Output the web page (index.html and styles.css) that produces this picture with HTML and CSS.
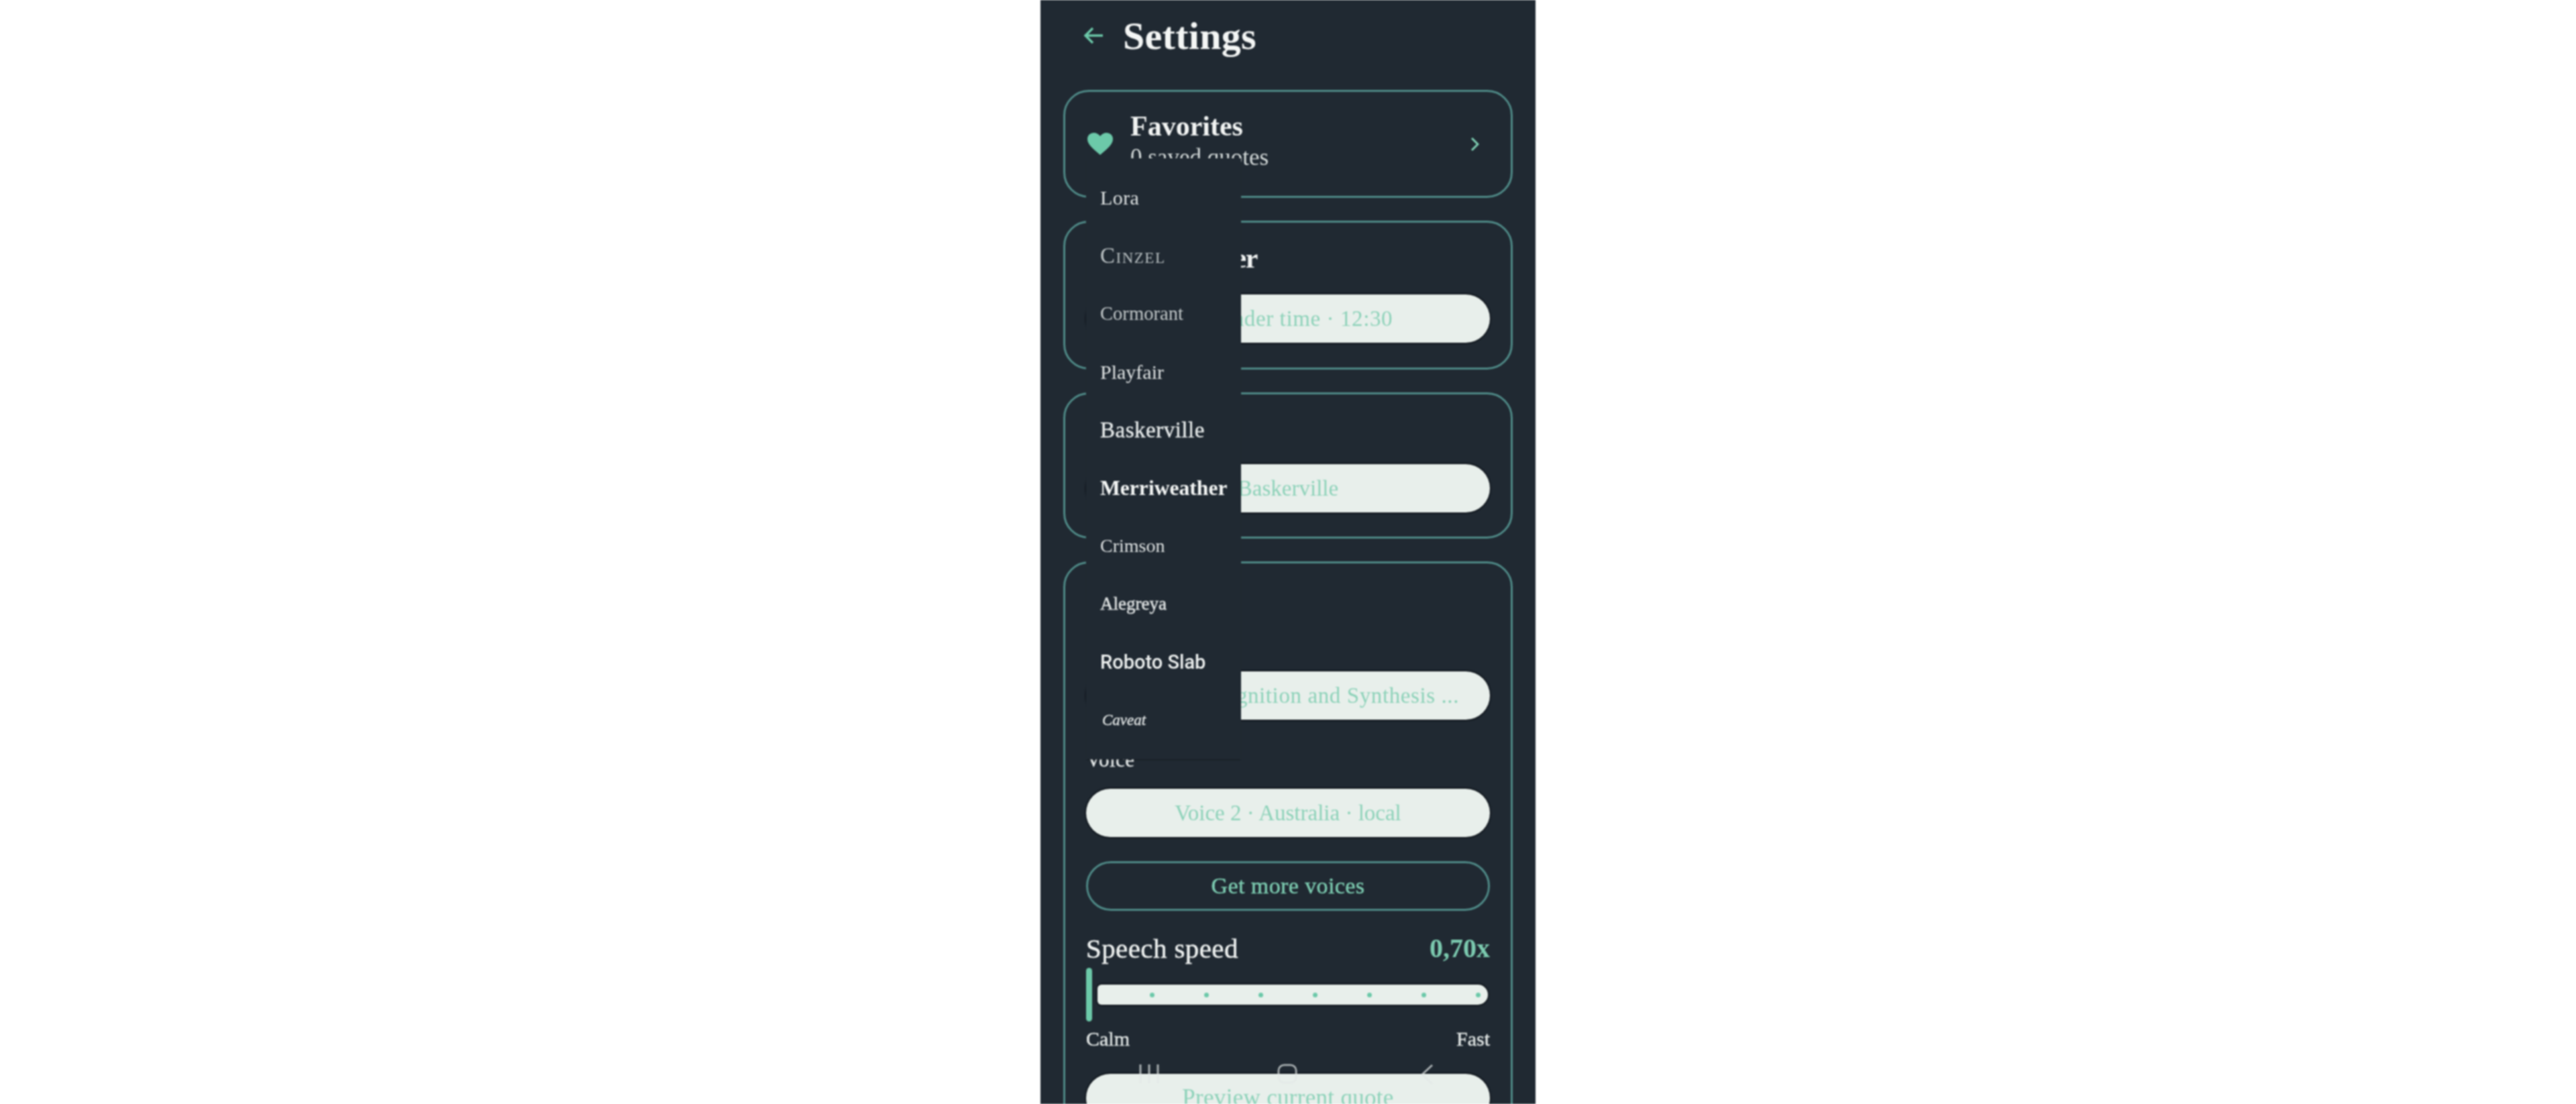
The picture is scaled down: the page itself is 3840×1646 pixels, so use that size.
FILE: index.html
```html
<!DOCTYPE html>
<html lang="en">
<head>
<meta charset="utf-8">
<title>Settings</title>
<link rel="stylesheet" href="styles.css">
</head>
<body>
<main class="phone">
  <header class="header">
    <svg class="back" viewBox="0 0 30 28" aria-hidden="true"><path d="M14 3 3 14l11 11M3 14h26"/></svg>
    <h1 class="page-title">Settings</h1>
  </header>

  <section class="card card-fav">
    <svg class="heart" viewBox="0 0 40 35" aria-hidden="true"><path d="M20 34C14 28 1 20 1 10.500 1 4.500 5.500 1 10.500 1 14.500 1 18 3 20 6 22 3 25.500 1 29.500 1 34.500 1 39 4.500 39 10.500 39 20 26 28 20 34Z"/></svg>
    <div class="fav-text">
      <div class="card-title">Favorites</div>
      <div class="fav-sub">0 saved quotes</div>
    </div>
    <svg class="chevron" viewBox="0 0 14 22" aria-hidden="true"><path d="M3 2l9 9-9 9"/></svg>
  </section>

  <section class="card card-reminder">
    <div class="card-title title-line title-reminder">Daily reminder</div>
    <div class="pill pill-spaced">Reminder time · 12:30</div>
  </section>

  <section class="card card-font">
    <div class="card-title title-line">Font</div>
    <div class="pill">Baskerville</div>
  </section>

  <section class="card card-speech">
    <div class="card-title title-line">Audio</div>
    <div class="label label-engine">Engine</div>
    <div class="pill pill-spaced">Speech Recognition and Synthesis ...</div>
    <div class="label label-voice">Voice</div>
    <div class="pill">Voice 2 · Australia · local</div>
    <div class="pill-outline">Get more voices</div>
    <div class="speed-row">
      <span class="speed-name">Speech speed</span>
      <span class="speed-value">0,70x</span>
    </div>
    <div class="slider">
      <span class="thumb"></span>
      <div class="track">
        <i class="dot"></i><i class="dot"></i><i class="dot"></i><i class="dot"></i><i class="dot"></i><i class="dot"></i><i class="dot"></i>
      </div>
    </div>
    <div class="ends"><span>Calm</span><span>Fast</span></div>
    <div class="pill pill-preview">Preview current quote</div>
  </section>

  <ul class="font-menu">
    <li class="f-lora">Lora</li>
    <li class="f-cinzel">Cinzel</li>
    <li class="f-cormorant">Cormorant</li>
    <li class="f-playfair">Playfair</li>
    <li class="f-baskerville">Baskerville</li>
    <li class="f-merriweather">Merriweather</li>
    <li class="f-crimson">Crimson</li>
    <li class="f-alegreya">Alegreya</li>
    <li class="f-roboto">Roboto Slab</li>
    <li class="f-caveat">Caveat</li>
  </ul>

  <nav class="sysnav" aria-hidden="true">
    <svg class="nav-recents" viewBox="0 0 32 30"><path d="M3 1v28M16 1v28M29 1v28"/></svg>
    <svg class="nav-home" viewBox="0 0 32 32"><rect x="2" y="2" width="28" height="28" rx="9"/></svg>
    <svg class="nav-back" viewBox="0 0 20 32"><path d="M18 2 3 16l15 14"/></svg>
  </nav>
</main>
</body>
</html>
```

FILE: styles.css
```css
* { box-sizing: border-box; }

html, body {
  margin: 0;
  height: 100%;
  background: #ffffff;
  overflow: hidden;
}

body {
  display: flex;
  justify-content: center;
  font-family: "Liberation Serif", serif;
}

.phone {
  position: relative;
  width: 738px;
  height: 1646px;
  padding: 0 34px;
  background: #202932;
  overflow: hidden;
  color: #eef1f0;
  filter: blur(0.8px);
}

.header {
  display: flex;
  align-items: center;
  height: 106px;
  padding-left: 30px;
  margin-bottom: 28px;
}

.back {
  width: 30px;
  height: 28px;
  margin-right: 29px;
  fill: none;
  stroke: #6cc9a9;
  stroke-width: 3.5;
}

.page-title {
  margin: 0;
  font-size: 58px;
  font-weight: 700;
  letter-spacing: 0.3px;
  color: #f4f6f5;
}

.card {
  margin-bottom: 34px;
  padding: 0 31px;
  border: 3px solid #4f8a87;
  border-radius: 38px;
}

.card-fav {
  display: flex;
  align-items: center;
  height: 161px;
  padding: 0 33px 0 32px;
}

.heart {
  flex: none;
  width: 40px;
  height: 35px;
  margin-right: 25px;
  fill: #6cc9a9;
}

.fav-text {
  flex: 1;
  padding-bottom: 12px;
}

.card-title {
  font-size: 42px;
  line-height: 50px;
  font-weight: 700;
  color: #f2f4f3;
}

.title-reminder {
  letter-spacing: -1.3px;
}

.fav-sub {
  margin-top: 2px;
  font-size: 35px;
  line-height: 40px;
  color: #d6dcdb;
}

.chevron {
  flex: none;
  width: 14px;
  height: 22px;
  margin-right: 14px;
  fill: none;
  stroke: #7fd0b4;
  stroke-width: 3;
}

.title-line {
  line-height: 60px;
  margin-bottom: 24px;
}

.card-reminder {
  height: 222px;
  padding-top: 23px;
}

.card-font {
  height: 218px;
  padding-top: 20px;
}

.card-speech {
  height: 1000px;
  padding-top: 20px;
  margin-bottom: 0;
}

.pill {
  height: 72px;
  border-radius: 36px;
  background: #e8efeb;
  box-shadow: 0 -1px 3px #0a0e13, 0 1px 3px #0a0e13;
  color: #8dd2b9;
  font-size: 33px;
  line-height: 72px;
  text-align: center;
  white-space: nowrap;
}

.pill-spaced {
  letter-spacing: 0.6px;
}

.label {
  font-size: 31px;
  line-height: 40px;
  margin-bottom: 23px;
  letter-spacing: 0.5px;
  color: #e6eaea;
  -webkit-text-stroke: 0.4px #e6eaea;
}

.card-speech .title-line { margin-bottom: 18px; }

.label-voice {
  margin-top: 40px;
}

.pill-outline {
  height: 74px;
  margin-top: 36px;
  border: 3px solid #4f8a87;
  border-radius: 37px;
  color: #7ccbb0;
  font-size: 34px;
  line-height: 68px;
  letter-spacing: 0.4px;
  -webkit-text-stroke: 0.5px #7ccbb0;
  text-align: center;
}

.speed-row {
  display: flex;
  justify-content: space-between;
  margin-top: 31px;
  line-height: 50px;
}

.speed-name {
  font-size: 41px;
  letter-spacing: 0.4px;
  color: #eef1f0;
  -webkit-text-stroke: 0.5px #eef1f0;
}

.speed-value {
  font-size: 40px;
  font-weight: 700;
  color: #7ccbb0;
}

.slider {
  display: flex;
  align-items: center;
  gap: 8px;
  height: 80px;
  margin-top: 4px;
}

.thumb {
  flex: none;
  width: 9px;
  height: 80px;
  border-radius: 5px;
  background: #6cc9a9;
}

.track {
  display: flex;
  align-items: center;
  gap: 74px;
  width: 582px;
  height: 30px;
  padding-left: 78px;
  border-radius: 6px 15px 15px 6px;
  background: #e8efeb;
  box-shadow: 0 -1px 3px #0a0e13, 0 1px 3px #0a0e13;
}

.dot {
  flex: none;
  width: 7px;
  height: 7px;
  border-radius: 50%;
  background: #6cc9a9;
}

.ends {
  display: flex;
  justify-content: space-between;
  margin-top: 6px;
  font-size: 30px;
  line-height: 40px;
  color: #dfe4e3;
  -webkit-text-stroke: 0.5px #dfe4e3;
}

.pill-preview {
  margin-top: 32px;
  border-radius: 40px;
  font-size: 35px;
  letter-spacing: 0.3px;
}

.font-menu {
  position: absolute;
  left: 68px;
  top: 236px;
  width: 231px;
  height: 896px;
  margin: 0;
  padding: 16px 0 15px 21px;
  list-style: none;
  display: flex;
  flex-direction: column;
  background: #202932;
  box-shadow: 0 2px 2px -1px rgba(0, 0, 0, 0.35);
}

.font-menu li {
  flex: 1;
  display: flex;
  align-items: center;
  white-space: nowrap;
  color: #dfe3e3;
}

.font-menu .f-lora { font-size: 30px; letter-spacing: 0.4px; }
.font-menu .f-cinzel { font-size: 33px; font-variant: small-caps; letter-spacing: 1.5px; color: #b9c0c2; }
.font-menu .f-cormorant { font-size: 28.6px; color: #c3c9ca; }
.font-menu .f-playfair { font-size: 30px; }
.font-menu .f-baskerville { font-size: 33px; letter-spacing: 0.5px; -webkit-text-stroke: 0.4px #e6eaea; color: #e6eaea; }
.font-menu .f-merriweather { font-size: 31.6px; font-weight: 700; color: #f4f6f5; }
.font-menu .f-crimson { font-size: 28px; }
.font-menu .f-alegreya { font-size: 27px; -webkit-text-stroke: 0.5px #dfe3e3; }
.font-menu .f-roboto { font-family: Roboto, sans-serif; font-size: 29px; font-weight: 500; color: #eef1f0; }
.font-menu .f-caveat { font-size: 23px; font-style: italic; padding-left: 3px; -webkit-text-stroke: 0.4px #dfe3e3; }

.sysnav {
  position: absolute;
  left: 0;
  right: 0;
  top: 1586px;
  height: 34px;
}

.sysnav svg {
  position: absolute;
  top: 0;
  fill: none;
  stroke: rgba(226, 232, 231, 0.7);
  stroke-width: 3;
}

.nav-recents { left: 146px; width: 32px; height: 30px; }
.nav-home { left: 353px; width: 30px; height: 30px; }
.nav-back { left: 566px; width: 20px; height: 32px; }
```
